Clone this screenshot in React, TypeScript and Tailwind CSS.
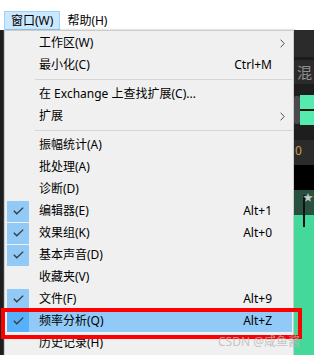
type MenuItem =
  | { kind: 'sep' }
  | {
      kind: 'item'
      label: string
      shortcut?: string
      submenu?: boolean
      checked?: boolean
      active?: boolean
    }

const items: MenuItem[] = [
  { kind: 'item', label: '工作区(W)', submenu: true },
  { kind: 'item', label: '最小化(C)', shortcut: 'Ctrl+M' },
  { kind: 'sep' },
  { kind: 'item', label: '在 Exchange 上查找扩展(C)...' },
  { kind: 'item', label: '扩展', submenu: true },
  { kind: 'sep' },
  { kind: 'item', label: '振幅统计(A)' },
  { kind: 'item', label: '批处理(A)' },
  { kind: 'item', label: '诊断(D)' },
  { kind: 'item', label: '编辑器(E)', shortcut: 'Alt+1', checked: true },
  { kind: 'item', label: '效果组(K)', shortcut: 'Alt+0', checked: true },
  { kind: 'item', label: '基本声音(D)', checked: true },
  { kind: 'item', label: '收藏夹(V)' },
  { kind: 'item', label: '文件(F)', shortcut: 'Alt+9', checked: true },
  { kind: 'item', label: '频率分析(Q)', shortcut: 'Alt+Z', checked: true, active: true },
  { kind: 'item', label: '历史记录(H)' },
]

function Check() {
  return (
    <svg width="11" height="8" viewBox="0 0 11 8" fill="none">
      <path d="M0.8 3.8 L3.8 6.8 L10.2 0.6" stroke="#3a3a3a" strokeWidth="1.3" />
    </svg>
  )
}

function Chevron() {
  return (
    <svg width="5" height="9" viewBox="0 0 5 9" fill="none">
      <path d="M0.7 0.7 L4.2 4.5 L0.7 8.3" stroke="#505050" strokeWidth="1" />
    </svg>
  )
}

function MenuRow({ item }: { item: Extract<MenuItem, { kind: 'item' }> }) {
  return (
    <div className="h-[22px]">
      <div
        className={`ml-[2px] mr-[1px] flex h-full items-center ${
          item.active ? 'bg-[#91c9f7]' : ''
        }`}
      >
        <div className="flex h-full w-[22px] items-center justify-center">
          {item.checked && (
            <div
              className={`flex h-[21px] w-[22px] items-center justify-center ${
                item.active ? 'bg-[#56b0fa]' : 'bg-[#91c9f7]'
              }`}
            >
              <Check />
            </div>
          )}
        </div>
        <span className="ml-[10px] flex-1 whitespace-nowrap">{item.label}</span>
        {item.shortcut && <span className="whitespace-nowrap">{item.shortcut}</span>}
        <div className="flex w-[20px] items-center justify-center pl-[1px]">
          {item.submenu && <Chevron />}
        </div>
      </div>
    </div>
  )
}

function Separator() {
  return (
    <div className="h-[7px] pl-[30px] pr-[1px] pt-[3px]">
      <div className="h-px bg-[#d5d5d5]" />
    </div>
  )
}

function AppStrip() {
  return (
    <div className="flex flex-1 flex-col overflow-hidden bg-[#1e1e1e]">
      <div className="h-[27px] bg-[#2b2b2b]" />
      <div className="h-[3px] bg-[#1c1c1c]" />
      <div className="flex h-[24px] items-center bg-[#2b2b2b] pl-[3px] text-[15px] leading-none text-[#8f8f8f]">
        混
      </div>
      <div className="h-[11px]" />
      <div className="flex h-[30px]">
        <div className="my-[1px] w-[6px] rounded-[2px] bg-[#4a4a4a]" />
        <div className="flex flex-1 flex-col">
          <div className="flex-1 bg-[#55eaae]" />
          <div className="h-[2px] bg-[#111]" />
          <div className="flex-1 bg-[#55eaae]" />
        </div>
      </div>
      <div className="h-[15px]" />
      <div className="flex h-[25px] items-start bg-[#2b2b2b] pl-[1px] pt-[5px] text-[12px] leading-none text-[#d39a4a]">
        0
      </div>
      <div className="h-[25px] bg-black" />
      <div className="relative h-[25px] bg-[#28503f]">
        <div className="absolute left-[9px] top-[5px] h-[32px] w-[2px] bg-[#111]" />
        <div className="absolute right-[1px] top-[2px] text-[10px] leading-none text-[#c9c9c9]">★</div>
      </div>
      <div className="flex-1 bg-[#44d89b]" />
    </div>
  )
}

export default function App() {
  return (
    <div
      className="relative h-[355px] w-[314px] overflow-hidden bg-white text-[12px] text-black"
      style={{ fontFamily: '"Noto Sans", "Noto Sans CJK SC", sans-serif' }}
    >
      <div className="flex h-[30px] items-end bg-white pl-[4px]">
        <div className="flex h-[19px] items-center border border-[#99d1ff] bg-[#cce8ff] px-[6px]">
          窗口(W)
        </div>
        <div className="flex h-[19px] items-center border border-transparent px-[6px]">
          帮助(H)
        </div>
      </div>

      <div className="flex h-[325px]">
        <div className="w-[4px] border-r border-[#3c3c3c] bg-[#1e1e1e]" />
        <div className="w-[290px] border-x border-t border-[#cccccc] bg-[#f0f0f0] pt-[1px] shadow-[2px_0_2px_rgba(0,0,0,0.3)]">
          {items.map((item, i) =>
            item.kind === 'sep' ? <Separator key={i} /> : <MenuRow key={i} item={item} />,
          )}
        </div>
        <AppStrip />
      </div>

      <div className="pointer-events-none absolute left-[1px] top-[308px] h-[31px] w-[301px] border-[4px] border-[#ff0000]" />

      <div className="pointer-events-none absolute left-[218px] top-[333px] whitespace-nowrap text-[12px] text-[#b8b8b8]/80">
        CSDN @咸鱼酱
      </div>
    </div>
  )
}
